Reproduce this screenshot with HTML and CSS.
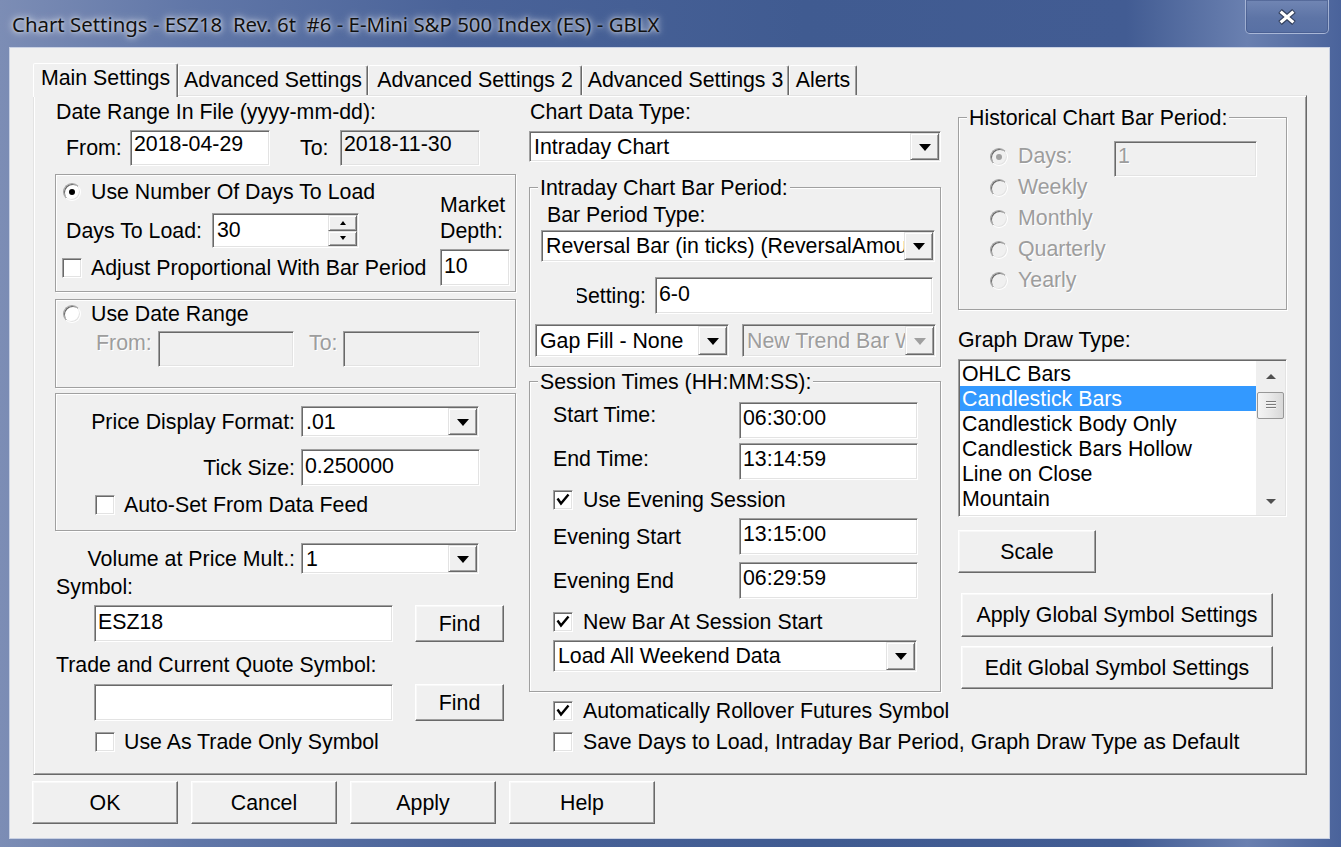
FILE: index.html
```html
<!DOCTYPE html>
<html>
<head>
<meta charset="utf-8">
<title>Chart Settings</title>
<link rel="stylesheet" href="styles.css">
</head>
<body>
<div class="win">
  <div class="titlebar">
    <div class="title">Chart Settings - ESZ18  Rev. 6t  #6 - E-Mini S&amp;P 500 Index (ES) - GBLX</div>
    <div class="closebtn">
      <svg width="20" height="16" viewBox="0 0 20 16"><path d="M3 2 L17 14 M17 2 L3 14" stroke="#34415e" stroke-width="5.5" fill="none"/><path d="M3.6 2.6 L16.4 13.4 M16.4 2.6 L3.6 13.4" stroke="#ffffff" stroke-width="3.2" fill="none"/></svg>
    </div>
  </div>
  <div class="client">
    <div class="tabstrip">
      <div class="tab sel tw1">Main Settings</div>
      <div class="tab tw2">Advanced Settings</div>
      <div class="tab tw3">Advanced Settings 2</div>
      <div class="tab tw4">Advanced Settings 3</div>
      <div class="tab tw5">Alerts</div>
    </div>
    <div class="panel">
      <!-- LEFT COLUMN -->
      <div class="col col1">
        <div class="lbl pl1">Date Range In File (yyyy-mm-dd):</div>
        <div class="row dates">
          <span class="lbl lf1">From:</span>
          <div class="edit e-date">2018-04-29</div>
          <span class="lbl lt1">To:</span>
          <div class="edit e-date dis">2018-11-30</div>
        </div>
        <div class="grp g1">
          <div class="g1l">
            <div class="opt o-r1"><span class="radio on"></span><span>Use Number Of Days To Load</span></div>
            <div class="row days">
              <span class="lbl ldays">Days To Load:</span>
              <div class="spin">
                <span class="spv">30</span>
                <span class="updown"><span class="ud"><i class="tu"></i></span><span class="ud"><i class="td"></i></span></span>
              </div>
            </div>
            <div class="opt o-c1"><span class="check"></span><span>Adjust Proportional With Bar Period</span></div>
          </div>
          <div class="g1r">
            <div class="lbl mdl">Market<br>Depth:</div>
            <div class="edit e-md">10</div>
          </div>
        </div>
        <div class="grp g2">
          <div class="opt o-r1"><span class="radio"></span><span>Use Date Range</span></div>
          <div class="row dr2">
            <span class="lbl dtext lf2">From:</span>
            <div class="edit dis e-d2a"></div>
            <span class="lbl dtext lt2">To:</span>
            <div class="edit dis e-d2b"></div>
          </div>
        </div>
        <div class="grp g3">
          <div class="row pr">
            <span class="lbl rl">Price Display Format:</span>
            <div class="combo c-pdf"><span class="cv">.01</span><span class="dd"><i class="tri"></i></span></div>
          </div>
          <div class="row tr">
            <span class="lbl rl">Tick Size:</span>
            <div class="edit e-tick">0.250000</div>
          </div>
          <div class="opt o-c3"><span class="check"></span><span>Auto-Set From Data Feed</span></div>
        </div>
        <div class="row vr">
          <span class="lbl rl2">Volume at Price Mult.:</span>
          <div class="combo c-pdf"><span class="cv">1</span><span class="dd"><i class="tri"></i></span></div>
        </div>
        <div class="lbl pl1 symlbl">Symbol:</div>
        <div class="row symrow">
          <div class="edit e-sym">ESZ18</div>
          <div class="btn b-find">Find</div>
        </div>
        <div class="lbl pl1 trlbl">Trade and Current Quote Symbol:</div>
        <div class="row symrow2">
          <div class="edit e-sym"></div>
          <div class="btn b-find">Find</div>
        </div>
        <div class="opt o-c4"><span class="check"></span><span>Use As Trade Only Symbol</span></div>
      </div>

      <!-- MIDDLE COLUMN -->
      <div class="col col2">
        <div class="lbl pl1">Chart Data Type:</div>
        <div class="combo c-cdt"><span class="cv">Intraday Chart</span><span class="dd"><i class="tri"></i></span></div>
        <div class="grp gi">
          <div class="legend">Intraday Chart Bar Period:</div>
          <div class="lbl bpt">Bar Period Type:</div>
          <div class="combo c-bpt"><span class="cv">Reversal Bar (in ticks) (ReversalAmount)</span><span class="dd"><i class="tri"></i></span></div>
          <div class="row setrow">
            <span class="lbl setl"><span>Setting:</span></span>
            <div class="edit e-set">6-0</div>
          </div>
          <div class="row gaprow">
            <div class="combo c-gap c-gap1"><span class="cv">Gap Fill - None</span><span class="dd"><i class="tri"></i></span></div>
            <div class="combo c-gap c-gap2 dis"><span class="cv">New Trend Bar When</span><span class="dd"><i class="tri"></i></span></div>
          </div>
        </div>
        <div class="grp gs">
          <div class="legend">Session Times (HH:MM:SS):</div>
          <div class="trow tr1"><span class="lbl tl">Start Time:</span><div class="edit e-time">06:30:00</div></div>
          <div class="trow tr2"><span class="lbl tl">End Time:</span><div class="edit e-time">13:14:59</div></div>
          <div class="opt o-s1"><span class="check"><svg class="ck" width="18" height="18" viewBox="0 0 18 18"><polyline points="3.5,7.5 7,12.5 14.5,3.5" fill="none" stroke="#000" stroke-width="2.4"/></svg></span><span>Use Evening Session</span></div>
          <div class="trow tr3"><span class="lbl tl">Evening Start</span><div class="edit e-time">13:15:00</div></div>
          <div class="trow tr4"><span class="lbl tl">Evening End</span><div class="edit e-time">06:29:59</div></div>
          <div class="opt o-s2"><span class="check"><svg class="ck" width="18" height="18" viewBox="0 0 18 18"><polyline points="3.5,7.5 7,12.5 14.5,3.5" fill="none" stroke="#000" stroke-width="2.4"/></svg></span><span>New Bar At Session Start</span></div>
          <div class="combo c-wk"><span class="cv">Load All Weekend Data</span><span class="dd"><i class="tri"></i></span></div>
        </div>
        <div class="opt o-ro1"><span class="check"><svg class="ck" width="18" height="18" viewBox="0 0 18 18"><polyline points="3.5,7.5 7,12.5 14.5,3.5" fill="none" stroke="#000" stroke-width="2.4"/></svg></span><span>Automatically Rollover Futures Symbol</span></div>
        <div class="opt o-ro2"><span class="check"></span><span>Save Days to Load, Intraday Bar Period, Graph Draw Type as Default</span></div>
      </div>

      <!-- RIGHT COLUMN -->
      <div class="col col3">
        <div class="grp gh">
          <div class="legend">Historical Chart Bar Period:</div>
          <div class="hrow hr1"><span class="radio on dis"></span><span class="dtext hl">Days:</span><div class="edit dis e-days"><span class="dtext">1</span></div></div>
          <div class="hrow"><span class="radio dis"></span><span class="dtext">Weekly</span></div>
          <div class="hrow"><span class="radio dis"></span><span class="dtext">Monthly</span></div>
          <div class="hrow"><span class="radio dis"></span><span class="dtext">Quarterly</span></div>
          <div class="hrow"><span class="radio dis"></span><span class="dtext">Yearly</span></div>
        </div>
        <div class="lbl gdt">Graph Draw Type:</div>
        <div class="listbox">
          <div class="items">
            <div class="item">OHLC Bars</div>
            <div class="item selitem">Candlestick Bars</div>
            <div class="item">Candlestick Body Only</div>
            <div class="item">Candlestick Bars Hollow</div>
            <div class="item">Line on Close</div>
            <div class="item">Mountain</div>
          </div>
          <div class="vscroll">
            <span class="sbu"><i class="stu"></i></span>
            <span class="thumb"><i class="grip"></i></span>
            <span class="sbsp"></span>
            <span class="sbd"><i class="std"></i></span>
          </div>
        </div>
        <div class="btn b-scale">Scale</div>
        <div class="btn b-glob b-ag">Apply Global Symbol Settings</div>
        <div class="btn b-glob b-eg">Edit Global Symbol Settings</div>
      </div>
    </div>
    <div class="btnrow">
      <div class="btn bb">OK</div>
      <div class="btn bb">Cancel</div>
      <div class="btn bb">Apply</div>
      <div class="btn bb">Help</div>
    </div>
  </div>
</div>
</body>
</html>
```

FILE: styles.css
```css
* { box-sizing: border-box; }
html, body { margin: 0; padding: 0; }
body {
  width: 1341px; height: 847px; overflow: hidden;
  font-family: "Liberation Sans", Arial, sans-serif;
  font-size: 21.33px; line-height: 24px; color: #000;
  background: #3f5a91;
}
.win {
  width: 1341px; height: 847px;
  background: linear-gradient(90deg, #7c8db5 0%, #6177a8 14%, #4a6399 34%, #405b91 60%, #425c93 84%, #6a80b0 93%, #4a639b 100%);
  display: flex; flex-direction: column;
}
.titlebar { height: 48px; display: flex; align-items: flex-start; flex: none; }
.title {
  font-family: "Noto Sans", "Open Sans", sans-serif;
  font-size: 20.4px; line-height: 28px; white-space: pre;
  padding: 10px 0 0 12px; color: #111;
  text-shadow: 0 0 10px rgba(255,255,255,0.75), 0 0 6px rgba(255,255,255,0.6), 0 0 3px rgba(255,255,255,0.5);
}
.closebtn {
  margin-left: auto; margin-right: 12px;
  width: 84px; height: 34px;
  border: 1px solid rgba(215,225,245,0.55); border-top: none;
  border-radius: 0 0 5px 5px;
  background: linear-gradient(180deg, #7186b4 0%, #5d74a6 55%, #5870a4 100%);
  box-shadow: inset 0 0 0 1px rgba(60,80,130,0.5);
  display: flex; align-items: center; justify-content: center;
}
.client {
  margin-left: 10px; width: 1319px; height: 790px; flex: none;
  background: #f0f0f0;
  box-shadow: 0 0 0 1px #c9d1e3;
  padding: 15px 0 0 23px;
}

/* tabs */
.tabstrip { height: 32px; display: flex; align-items: flex-end; }
.tab {
  height: 30px; text-align: center; white-space: nowrap;
  border: 1px solid; border-bottom: none;
  border-color: #fff #696969 transparent #fff;
  box-shadow: inset -1px 0 0 #a0a0a0;
  border-radius: 2px 2px 0 0;
  padding-top: 2px; background: #f0f0f0;
}
.tab.sel { height: 34px; margin-bottom: -2px; position: relative; z-index: 2; }
.tw1 { width: 145px; }
.tw2 { width: 190px; }
.tw3 { width: 214px; }
.tw4 { width: 207px; }
.tw5 { width: 68px; }

.panel {
  position: relative; z-index: 1;
  width: 1274px; height: 680px;
  border: 1px solid; border-color: #e3e3e3 #696969 #696969 #e3e3e3;
  box-shadow: inset 1px 1px 0 #fff, inset -1px -1px 0 #a0a0a0;
  padding: 4px 0 0 21px;
  display: flex; align-items: flex-start;
}
.col { flex: none; display: flex; flex-direction: column; }
.col1 { width: 461px; }
.col2 { width: 412px; margin-left: 13px; }
.col3 { width: 329px; margin-left: 17px; }

/* generic widgets */
.lbl { white-space: nowrap; flex: none; }
.pl1 { padding-left: 1px; }
.row { display: flex; flex: none; }
.dtext { color: #9d9d9d; text-shadow: 1px 1px 0 #fff; }

.edit {
  flex: none; background: #fff;
  border: 1px solid; border-color: #a0a0a0 #fff #fff #a0a0a0;
  box-shadow: inset 1px 1px 0 #696969, inset -1px -1px 0 #e3e3e3;
  padding: 4px 3px 0 3px; white-space: nowrap; overflow: hidden;
}
.edit.dis { background: #f0f0f0; }

.combo {
  flex: none; display: flex; background: #fff;
  border: 1px solid; border-color: #a0a0a0 #fff #fff #a0a0a0;
  box-shadow: inset 1px 1px 0 #696969, inset -1px -1px 0 #e3e3e3;
  padding: 1px;
}
.cv { flex: 1; min-width: 0; overflow: hidden; white-space: nowrap; padding-left: 3px; display: flex; align-items: center; }
.dd {
  width: 29px; flex: none; background: #f0f0f0;
  border: 1px solid; border-color: #e3e3e3 #696969 #696969 #e3e3e3;
  box-shadow: inset 1px 1px 0 #fff, inset -1px -1px 0 #a0a0a0;
  display: flex; align-items: center; justify-content: center;
}
.tri { width: 0; height: 0; border-left: 6.5px solid transparent; border-right: 6.5px solid transparent; border-top: 7px solid #000; margin-top: 1px; }
.combo.dis { background: #f0f0f0; }
.combo.dis .cv { color: #9d9d9d; text-shadow: 1px 1px 0 #fff; }
.combo.dis .tri { border-top-color: #a0a0a0; }

.btn {
  flex: none; background: #f0f0f0;
  border: 1px solid; border-color: #fff #696969 #696969 #fff;
  box-shadow: inset -1px -1px 0 #a0a0a0, inset 1px 1px 0 #f8f8f8;
  display: flex; align-items: center; justify-content: center;
  white-space: nowrap;
}

.opt { display: flex; align-items: center; height: 24px; white-space: nowrap; flex: none; }
.radio {
  width: 18px; height: 18px; flex: none; border-radius: 50%;
  background: #fff;
  border: 1px solid; border-color: #a0a0a0 #ffffff #ffffff #a0a0a0;
  box-shadow: inset 1px 1px 0 #696969, inset -1px -1px 0 #e3e3e3;
  display: flex; align-items: center; justify-content: center;
  margin-right: 10px;
}
.radio.on::after { content: ""; width: 6px; height: 6px; border-radius: 50%; background: #000; }
.radio.dis { background: #f0f0f0; }
.radio.on.dis::after { background: #a0a0a0; }
.check {
  width: 20px; height: 20px; flex: none; background: #fff;
  border: 1px solid; border-color: #a0a0a0 #fff #fff #a0a0a0;
  box-shadow: inset 1px 1px 0 #696969, inset -1px -1px 0 #e3e3e3;
  margin-right: 9px;
}
.ck { display: block; }

.grp {
  flex: none;
  border: 1px solid #a0a0a0;
  box-shadow: inset 1px 1px 0 #fff, 1px 1px 0 #fff;
}
.legend {
  margin-top: -12px; margin-left: 8px; padding: 0 2px;
  background: #f0f0f0; width: max-content; line-height: 24px; white-space: nowrap;
}

/* left column */
.dates { margin-top: 6px; height: 36px; align-items: center; padding-left: 11px; }
.lf1 { width: 64px; }
.lt1 { width: 40px; margin-left: 30px; }
.e-date { width: 140px; height: 36px; padding-top: 1px; }

.g1 { margin-top: 8px; height: 118px; display: flex; }
.g1l { width: 384px; padding-top: 5px; display: flex; flex-direction: column; }
.o-r1 .radio { margin-left: 7px; }
.days { margin-top: 9px; height: 35px; align-items: center; padding-left: 10px; }
.ldays { width: 146px; }
.spin {
  width: 147px; height: 35px; display: flex; background: #fff;
  border: 1px solid; border-color: #a0a0a0 #fff #fff #a0a0a0;
  box-shadow: inset 1px 1px 0 #696969, inset -1px -1px 0 #e3e3e3;
  padding: 1px;
}
.spv { flex: 1; padding: 3px 0 0 3px; }
.updown { width: 29px; display: flex; flex-direction: column; }
.ud {
  flex: 1; background: #f0f0f0;
  border: 1px solid; border-color: #e3e3e3 #696969 #696969 #e3e3e3;
  box-shadow: inset 1px 1px 0 #fff, inset -1px -1px 0 #a0a0a0;
  display: flex; align-items: center; justify-content: center;
}
.tu { width: 0; height: 0; border-left: 3.5px solid transparent; border-right: 3.5px solid transparent; border-bottom: 4px solid #000; }
.td { width: 0; height: 0; border-left: 3.5px solid transparent; border-right: 3.5px solid transparent; border-top: 4px solid #000; }
.o-c1 { margin-top: 8px; }
.o-c1 .check { margin-left: 6px; }
.g1r { padding-top: 17px; display: flex; flex-direction: column; }
.mdl { line-height: 26px; }
.e-md { margin-top: 5px; width: 70px; height: 37px; }

.g2 { margin-top: 7px; height: 89px; padding-top: 2px; display: flex; flex-direction: column; }
.dr2 { margin-top: 5px; height: 36px; align-items: flex-start; padding-left: 40px; }
.lf2 { width: 62px; }
.lt2 { width: 34px; margin-left: 15px; }
.e-d2a { width: 136px; height: 36px; }
.e-d2b { width: 137px; height: 36px; }

.g3 { margin-top: 5px; height: 138px; padding-top: 12px; display: flex; flex-direction: column; }
.pr { height: 31px; align-items: center; }
.rl { width: 245px; padding-right: 6px; text-align: right; }
.c-pdf { width: 178px; height: 31px; }
.tr { margin-top: 12px; height: 37px; align-items: center; }
.e-tick { width: 179px; height: 37px; }
.o-c3 { margin-top: 7px; }
.o-c3 .check { margin-left: 39px; }

.vr { margin-top: 12px; height: 31px; align-items: center; }
.rl2 { width: 246px; padding-right: 6px; text-align: right; }
.symlbl { margin-top: 1px; }
.symrow { margin-top: 6px; height: 37px; padding-left: 39px; }
.e-sym { width: 299px; height: 37px; }
.b-find { width: 89px; height: 37px; margin-left: 22px; }
.trlbl { margin-top: 11px; }
.symrow2 { margin-top: 7px; height: 37px; padding-left: 39px; }
.o-c4 { margin-top: 9px; }
.o-c4 .check { margin-left: 40px; }

/* middle column */
.c-cdt { margin-top: 7px; width: 412px; height: 31px; }
.gi { margin-top: 25px; height: 180px; display: flex; flex-direction: column; }
.bpt { margin-top: 3px; padding-left: 17px; }
.c-bpt { margin-top: 3px; margin-left: 11px; width: 394px; height: 32px; }
.setrow { margin-top: 15px; height: 37px; align-items: center; }
.setl { margin-left: 47px; width: 69px; overflow: hidden; display: flex; justify-content: flex-end; }
.setl span { flex: none; }
.e-set { margin-left: 9px; width: 278px; height: 37px; }
.gaprow { margin-top: 10px; height: 33px; }
.c-gap { width: 194px; height: 33px; }
.c-gap1 { margin-left: 5px; }
.c-gap2 { margin-left: 13px; }

.gs { margin-top: 14px; height: 311px; display: flex; flex-direction: column; }
.trow { display: flex; align-items: flex-start; padding-left: 23px; height: 37px; flex: none; }
.tl { width: 186px; }
.e-time { width: 179px; height: 37px; padding-top: 3px; }
.tr1 { margin-top: 8px; }
.tr1 .tl { margin-top: 1px; }
.tr2 { margin-top: 4px; }
.tr2 .tl { margin-top: 4px; }
.tr3 { margin-top: 6px; }
.tr3 .tl { margin-top: 7px; }
.tr4 { margin-top: 7px; }
.tr4 .tl { margin-top: 7px; }
.o-s1 { margin-top: 8px; margin-left: 23px; }
.o-s2 { margin-top: 11px; margin-left: 23px; }
.o-s1 .check, .o-s2 .check, .o-ro1 .check, .o-ro2 .check { margin-right: 10px; }
.c-wk { margin-top: 6px; margin-left: 23px; width: 364px; height: 32px; }
.o-ro1 { margin-top: 7px; margin-left: 24px; }
.o-ro2 { margin-top: 7px; margin-left: 24px; }

/* right column */
.gh { margin-top: 17px; height: 193px; display: flex; flex-direction: column; }
.hrow { display: flex; align-items: flex-start; height: 31px; padding-left: 31px; flex: none; }
.hrow .radio { margin-top: 7px; }
.hrow .dtext { line-height: 31px; }
.hr1 { margin-top: 11px; }
.hl { width: 96px; }
.e-days { width: 143px; height: 36px; padding-top: 2px; }
.e-days .dtext { line-height: 24px; }
.gdt { margin-top: 18px; }
.listbox {
  margin-top: 7px; width: 329px; height: 158px; flex: none;
  display: flex; background: #fff;
  border: 1px solid; border-color: #a0a0a0 #fff #fff #a0a0a0;
  box-shadow: inset 1px 1px 0 #696969, inset -1px -1px 0 #e3e3e3;
  padding: 1px;
}
.items { width: 296px; overflow: hidden; }
.item { height: 25px; line-height: 26px; padding-left: 2px; white-space: nowrap; }
.selitem { background: #3399ff; color: #fff; }
.vscroll { width: 29px; display: flex; flex-direction: column; align-items: center; background: #efefef; }
.sbu { height: 30px; width: 100%; display: flex; align-items: center; justify-content: center; flex: none; }
.stu { width: 0; height: 0; border-left: 5px solid transparent; border-right: 5px solid transparent; border-bottom: 5px solid #505050; }
.thumb {
  margin-top: 1px; width: 27px; height: 27px; flex: none;
  border: 1px solid #979797; border-radius: 2px;
  background: linear-gradient(90deg, #f4f4f4 0%, #e8e8e8 50%, #d8d8d8 100%);
  display: flex; align-items: center; justify-content: center;
}
.grip { width: 10px; height: 9px; background: repeating-linear-gradient(180deg, #7a7a7a 0, #7a7a7a 1px, #f4f4f4 1px, #f4f4f4 2px, transparent 2px, transparent 3px); }
.sbsp { flex: 1; }
.sbd { height: 28px; width: 100%; display: flex; align-items: center; justify-content: center; flex: none; }
.std { width: 0; height: 0; border-left: 5px solid transparent; border-right: 5px solid transparent; border-top: 5px solid #505050; }
.b-scale { margin-top: 13px; width: 138px; height: 43px; }
.b-glob { width: 312px; margin-left: 3px; }
.b-ag { margin-top: 20px; height: 44px; }
.b-eg { margin-top: 9px; height: 43px; }

/* bottom buttons */
.btnrow { display: flex; gap: 13px; margin-top: 6px; margin-left: -1px; }
.bb { width: 146px; height: 43px; }
```
